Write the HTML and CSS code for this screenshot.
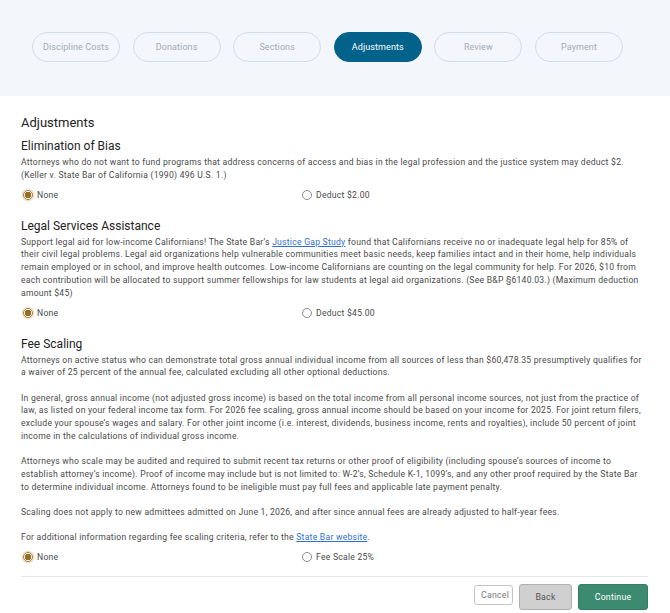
FILE: index.html
```html
<!DOCTYPE html>
<html lang="en">
<head>
<meta charset="utf-8">
<title>Adjustments</title>
<link rel="stylesheet" href="styles.css">
</head>
<body>
<header class="steps-bar">
  <nav class="steps">
    <span class="step">Discipline Costs</span>
    <span class="step">Donations</span>
    <span class="step">Sections</span>
    <span class="step step-active">Adjustments</span>
    <span class="step">Review</span>
    <span class="step">Payment</span>
  </nav>
</header>
<main class="content">
  <h1 class="page-title">Adjustments</h1>

  <section class="block">
    <h2 class="block-title">Elimination of Bias</h2>
    <p class="text">Attorneys who do not want to fund programs that address concerns of access and bias in the legal profession and the justice system may deduct $2. (Keller v. State Bar of California (1990) 496 U.S. 1.)</p>
    <div class="options">
      <label class="option"><span class="radio radio-on"></span>None</label>
      <label class="option"><span class="radio"></span>Deduct $2.00</label>
    </div>
  </section>

  <section class="block">
    <h2 class="block-title">Legal Services Assistance</h2>
    <p class="text">Support legal aid for low-income Californians! The State Bar’s <a class="link" href="#">Justice Gap Study</a> found that Californians receive no or inadequate legal help for 85% of their civil legal problems. Legal aid organizations help vulnerable communities meet basic needs, keep families intact and in their home, help individuals remain employed or in school, and improve health outcomes. Low-income Californians are counting on the legal community for help. For 2026, $10 from each contribution will be allocated to support summer fellowships for law students at legal aid organizations. (See B&amp;P §6140.03.) (Maximum deduction amount $45)</p>
    <div class="options">
      <label class="option"><span class="radio radio-on"></span>None</label>
      <label class="option"><span class="radio"></span>Deduct $45.00</label>
    </div>
  </section>

  <section class="block">
    <h2 class="block-title">Fee Scaling</h2>
    <p class="text gap">Attorneys on active status who can demonstrate total gross annual individual income from all sources of less than $60,478.35 presumptively qualifies for a waiver of 25 percent of the annual fee, calculated excluding all other optional deductions.</p>
    <p class="text gap">In general, gross annual income (not adjusted gross income) is based on the total income from all personal income sources, not just from the practice of law, as listed on your federal income tax form. For 2026 fee scaling, gross annual income should be based on your income for 2025. For joint return filers, exclude your spouse’s wages and salary. For other joint income (i.e. interest, dividends, business income, rents and royalties), include 50 percent of joint income in the calculations of individual gross income.</p>
    <p class="text gap">Attorneys who scale may be audited and required to submit recent tax returns or other proof of eligibility (including spouse’s sources of income to establish attorney’s income). Proof of income may include but is not limited to: W-2’s, Schedule K-1, 1099’s, and any other proof required by the State Bar to determine individual income. Attorneys found to be ineligible must pay full fees and applicable late payment penalty.</p>
    <p class="text gap">Scaling does not apply to new admittees admitted on June 1, 2026, and after since annual fees are already adjusted to half-year fees.</p>
    <p class="text">For additional information regarding fee scaling criteria, refer to the <a class="link" href="#">State Bar website</a>.</p>
    <div class="options">
      <label class="option"><span class="radio radio-on"></span>None</label>
      <label class="option"><span class="radio"></span>Fee Scale 25%</label>
    </div>
  </section>

  <footer class="actions">
    <button class="btn btn-cancel" type="button">Cancel</button>
    <button class="btn btn-back" type="button">Back</button>
    <button class="btn btn-continue" type="button">Continue</button>
  </footer>
</main>
</body>
</html>
```
FILE: styles.css
```css
* { box-sizing: border-box; }

html, body {
  margin: 0;
  padding: 0;
  background: #ffffff;
  font-family: Roboto, "Liberation Sans", Arial, sans-serif;
}

.steps-bar {
  background: #f3f6fa;
  height: 96px;
  padding: 32px 0 0 32px;
}

.steps {
  display: flex;
  gap: 12.6px;
}

.step {
  width: 88px;
  height: 30px;
  border: 1px solid #d6dce3;
  border-radius: 15px;
  display: flex;
  align-items: center;
  justify-content: center;
  font-size: 9px;
  color: #a3abb4;
  letter-spacing: 0.1px;
}

.step-active {
  background: #03628a;
  border-color: #03628a;
  color: #ffffff;
}

.content {
  padding: 19px 22px 0 21px;
}

.page-title {
  margin: 0 0 8px;
  font-size: 13px;
  line-height: 16px;
  font-weight: 400;
  color: #222222;
}

.block {
  margin-bottom: 17px;
}

.block:last-of-type {
  margin-bottom: 0;
}

.block-title {
  margin: 0 0 2px;
  font-size: 12px;
  line-height: 15px;
  font-weight: 400;
  color: #222222;
}

.text {
  margin: 0;
  font-size: 8.6px;
  line-height: 12.8px;
  letter-spacing: 0.25px;
  color: #4a4a4a;
}

.gap {
  margin-bottom: 12.4px;
}

.link {
  color: #2f6fd1;
  text-decoration: underline;
}

.options {
  display: grid;
  grid-template-columns: 279px 1fr;
  margin-top: 6px;
  padding-left: 2px;
  height: 14px;
}

.option {
  display: flex;
  align-items: center;
  gap: 4px;
  font-size: 8.6px;
  letter-spacing: 0.25px;
  color: #4a4a4a;
}

.radio {
  width: 10px;
  height: 10px;
  border-radius: 50%;
  border: 1px solid #8c8c8c;
  background: #ffffff;
  flex: none;
}

.radio-on {
  border-color: #9a7a45;
  background: radial-gradient(circle, #9a6a1e 0 3px, #ffffff 3.5px);
  box-shadow: 0 0 0 1.5px #f0e3cb;
}

.actions {
  border-top: 1px solid #e6e6e6;
  margin-top: 12px;
  padding-top: 7px;
  display: flex;
  justify-content: flex-end;
  align-items: flex-start;
  gap: 6px;
}

.btn {
  font-family: Roboto, "Liberation Sans", Arial, sans-serif;
  font-size: 8.8px;
  letter-spacing: 0.2px;
  border-radius: 3px;
  cursor: pointer;
}

.btn-cancel {
  width: 39px;
  height: 20px;
  margin-top: 1px;
  background: #ffffff;
  border: 1px solid #c4c4c4;
  color: #7a7a7a;
}

.btn-back {
  width: 53px;
  height: 26px;
  background: #d0d0d0;
  border: 1px solid #b0b0b0;
  color: #555555;
}

.btn-continue {
  width: 70px;
  height: 26px;
  background: #3c8a6f;
  border: 1px solid #357d64;
  color: #ffffff;
}
```
